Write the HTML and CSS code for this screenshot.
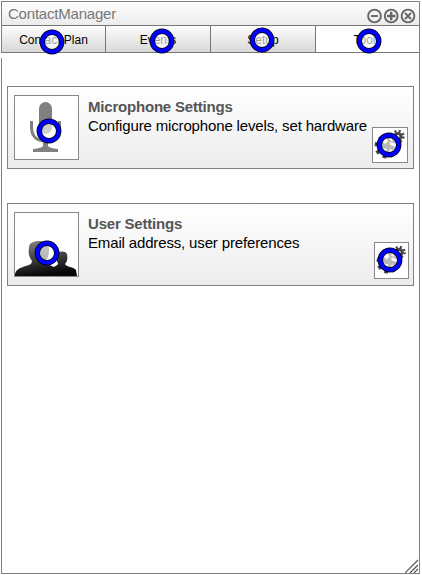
FILE: index.html
```html
<!DOCTYPE html>
<html lang="en">
<head>
<meta charset="utf-8">
<title>ContactManager</title>
<link rel="stylesheet" href="styles.css">
</head>
<body>
<svg class="defs" width="0" height="0">
  <defs>
    <linearGradient id="people" x1="0" y1="0" x2="0.25" y2="1"><stop offset="0" stop-color="#888"/><stop offset="1" stop-color="#080808"/></linearGradient>
    <symbol id="ring" viewBox="0 0 26 26">
      <circle cx="13" cy="13" r="9.7" fill="#fff" fill-opacity=".62" stroke="#000" stroke-width="5.4"/>
      <circle cx="13" cy="13" r="9.7" fill="none" stroke="#00f" stroke-width="3.9"/>
    </symbol>
    <symbol id="gears" viewBox="0 0 34 34">
      <g fill="none" stroke="#484848">
        <circle cx="13.500" cy="18.500" r="7.5" fill="#484848" stroke="none"/>
        <circle cx="13.500" cy="18.500" r="9.5" stroke-width="5" stroke-dasharray="3.6 3.86"/>
        <circle cx="25" cy="8.500" r="3" stroke-width="3.2"/>
        <circle cx="25" cy="8.500" r="5.4" stroke-width="2.6" stroke-dasharray="2 2.24"/>
      </g>
      <path d="M9 13l4-3 2 3-3 3zM17 14l4 1v3l-4-1zM9 20l5 1-2 4-5-2zM17 21l4 2-3 3-2-2z" fill="#fff"/>
    </symbol>
  </defs>
</svg>
<main class="window">
  <header class="titlebar">
    <h1>ContactManager</h1>
    <svg class="controls" width="49" height="16" viewBox="0 0 49 16" fill="none" stroke="#666" stroke-width="1.9">
      <circle cx="7.5" cy="8" r="6.4"/><path d="M4 8h7"/>
      <circle cx="24.2" cy="8" r="6.4"/><path d="M20 8h8.400M24.200 3.800v8.400" stroke-width="2.4"/>
      <circle cx="41" cy="8" r="6.4"/><path d="M38 5l6 6M44 5l-6 6"/>
    </svg>
  </header>
  <nav class="tabs">
    <div class="tab"><span>Contact Plan</span><svg class="ring ring-plan"><use href="#ring"/></svg></div>
    <div class="tab"><span>Events</span><svg class="ring ring-events"><use href="#ring"/></svg></div>
    <div class="tab"><span>Setup</span><svg class="ring ring-setup"><use href="#ring"/></svg></div>
    <div class="tab active"><span>Tools</span><svg class="ring ring-tools"><use href="#ring"/></svg></div>
  </nav>
  <section class="content">
    <article class="card">
      <div class="thumb">
        <svg width="63" height="63" viewBox="0 0 63 63">
          <rect x="24" y="6" width="13" height="32" rx="6.5" fill="#808080"/>
          <path d="M16.500 25v6c0 9 5 14 14 14s14-5 14-14v-6" fill="none" stroke="#808080" stroke-width="3"/>
          <path d="M28 44h5v6q1 2 10 3v3H18v-3q9-1 10-3z" fill="#808080"/>
        </svg>
        <svg class="ring ring-mic"><use href="#ring"/></svg>
      </div>
      <div class="info"><h2>Microphone Settings</h2><p>Configure microphone levels, set hardware</p></div>
      <div class="gear"><svg width="34" height="34"><use href="#gears"/></svg><svg class="ring ring-gear"><use href="#ring"/></svg></div>
    </article>
    <article class="card">
      <div class="thumb">
        <svg width="63" height="63" viewBox="0 0 63 63">
          <path d="M0 63c0-5 2-7 8-9 5-2 9-2 9-6-3-4-4-8-3-13 0-5 4-7 10-7 7 0 10 3 10 9 0 5-1 8-3 10 0 4 4 5 8 7 3-2 4-2 4-4-3-4-3-10 0-11 3-1 8-1 9 2 1 5 0 8-2 10 1 3 9 3 11 6l1 6z" fill="url(#people)"/>
        </svg>
        <svg class="ring ring-user"><use href="#ring"/></svg>
      </div>
      <div class="info"><h2>User Settings</h2><p>Email address, user preferences</p></div>
      <div class="gear gear-user"><svg width="33" height="35"><use href="#gears"/></svg><svg class="ring ring-gear-user"><use href="#ring"/></svg></div>
    </article>
  </section>
  <svg class="grip" width="14" height="14" viewBox="0 0 14 14" stroke="#555" stroke-width="1.2"><path d="M0 14L13 1M5 14l8-8M9 14l4-4"/></svg>
</main>
</body>
</html>
```
FILE: styles.css
```css
* { box-sizing: border-box; }
body { margin: 0; width: 422px; height: 575px; padding: 1px 2px 1px 1px; background: #fff; font-family: "Liberation Sans", sans-serif; overflow: hidden; }
h1, h2, p { margin: 0; white-space: nowrap; }
svg { display: block; }
.defs { position: absolute; }
.window { position: relative; width: 419px; height: 573px; border: 1px solid #808080; border-left: 0; display: flex; flex-direction: column; }
.titlebar { height: 24px; border-bottom: 1px solid #777; border-left: 1px solid #808080; display: flex; justify-content: space-between; padding: 3px 3px 0 6px; background: linear-gradient(#fff, #ececec); }
h1 { font-size: 15px; font-weight: 400; line-height: 18px; letter-spacing: -.21px; color: #777; }
.controls { margin-top: 3px; }
.tabs { height: 27px; display: grid; grid-template-columns: 104px 105px 105px 1fr; grid-template-rows: 26px; border-bottom: 1px solid #777; border-left: 1px solid #808080; }
.tab { position: relative; border-right: 1px solid #777; background: linear-gradient(#fdfdfd, #d8d8d8); text-align: center; font-size: 12px; line-height: 28px; color: #000; }
.tab.active { background: #fff; border-right: 0; }
.ring { position: absolute; width: 26px; height: 26px; }
.ring-plan { left: 37px; top: 3px; }
.ring-events { left: 42.5px; top: 1.5px; }
.ring-setup { left: 37.5px; top: .5px; }
.ring-tools { left: 40px; top: 2px; }
.content { flex: 1; margin-top: 5px; padding: 28px 5px 0; border-left: 1px solid #808080; display: flex; flex-direction: column; gap: 34px; }
.card { height: 83px; width: 407px; border: 1px solid #808080; background: linear-gradient(#fff, #ececec); display: flex; padding: 8px 5px 0 6px; }
.thumb { position: relative; width: 65px; height: 65px; border: 1px solid #888; background: #fff; flex: none; }
.info { width: 284px; padding: 2px 0 0 9px; flex: none; }
h2 { font-size: 15px; line-height: 19px; letter-spacing: -.2px; color: #555; }
.info p { font-size: 15px; line-height: 19px; letter-spacing: -.15px; color: #000; }
.gear { position: relative; width: 36px; height: 36px; border: 1px solid #888; background: #fff; margin: 32px 0 0 9px; flex: none; }
.gear-user { width: 35px; height: 37px; margin: 30px 0 0 11px; }
.ring-mic { left: 21px; top: 21.5px; }
.ring-user { left: 19px; top: 27px; }
.ring-gear { left: 3px; top: 4px; }
.ring-gear-user { left: 1.5px; top: 3.5px; }
.grip { position: absolute; right: 0; bottom: 0; }
```
